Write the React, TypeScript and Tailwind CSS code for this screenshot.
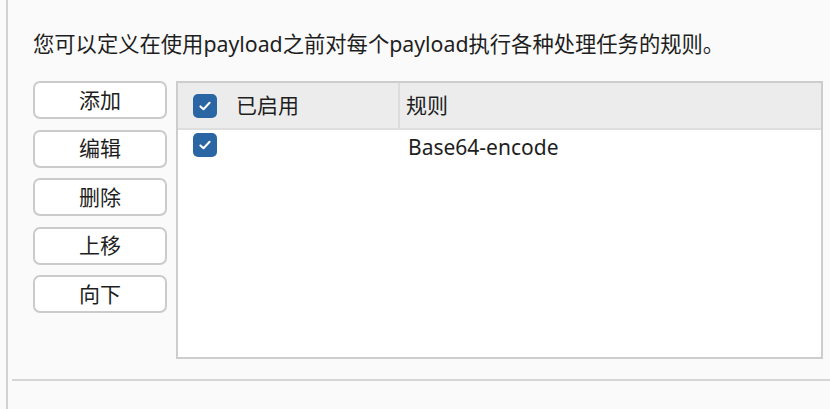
import React from "react";

const font = { fontFamily: '"Noto Sans", "Noto Sans CJK SC", sans-serif' };

function Check() {
  return (
    <div className="w-[24px] h-[24px] rounded-[5px] bg-[#2b66a4] flex items-center justify-center shrink-0">
      <svg width="16" height="16" viewBox="0 0 16 16" fill="none">
        <path d="M3.4 8.4 L6.5 11.3 L12.6 4.8" stroke="white" strokeWidth="2" strokeLinecap="round" strokeLinejoin="round" />
      </svg>
    </div>
  );
}

function Btn({ label }: { label: string }) {
  return (
    <button className="h-[38px] w-[134px] rounded-[7px] border-2 border-[#cbcbcb] bg-white text-[21px] leading-none text-[#1e1e1e] flex items-center justify-center">
      {label}
    </button>
  );
}

export default function App() {
  return (
    <div className="w-[830px] h-[409px] bg-[#fafafa] overflow-hidden text-[#1e1e1e]" style={font}>
      <div className="ml-[6px] h-full border-l-2 border-[#d2d2d2] flex flex-col">
        <div className="pl-[25px] pt-[29px]">
          <div className="text-[21.3px] leading-[30px] whitespace-nowrap">
            您可以定义在使用payload之前对每个payload执行各种处理任务的规则。
          </div>
          <div className="flex mt-[22px]">
            <div className="flex flex-col gap-[10.5px] w-[134px]">
              <Btn label="添加" />
              <Btn label="编辑" />
              <Btn label="删除" />
              <Btn label="上移" />
              <Btn label="向下" />
            </div>
            <div className="ml-[9px] w-[647px] h-[278px] border-2 border-[#cdcdcd] bg-white flex flex-col">
              <div className="h-[47px] bg-[#ececec] border-b-2 border-[#dedede] flex">
                <div className="w-[222px] border-r-2 border-[#dcdcdc] flex items-center pl-[15px]">
                  <Check />
                  <span className="ml-[19px] text-[21px] leading-none">已启用</span>
                </div>
                <div className="flex items-center pl-[6px] text-[21px] leading-none">规则</div>
              </div>
              <div className="flex h-[32px] pt-[3px]">
                <div className="w-[224px] pl-[15px]">
                  <Check />
                </div>
                <div className="pl-[6px] text-[21px] leading-[26px] pt-[1px]">Base64-encode</div>
              </div>
            </div>
          </div>
        </div>
        <div className="mt-[20px] ml-[4px] h-[2px] bg-[#d6d6d6]" />
      </div>
    </div>
  );
}
